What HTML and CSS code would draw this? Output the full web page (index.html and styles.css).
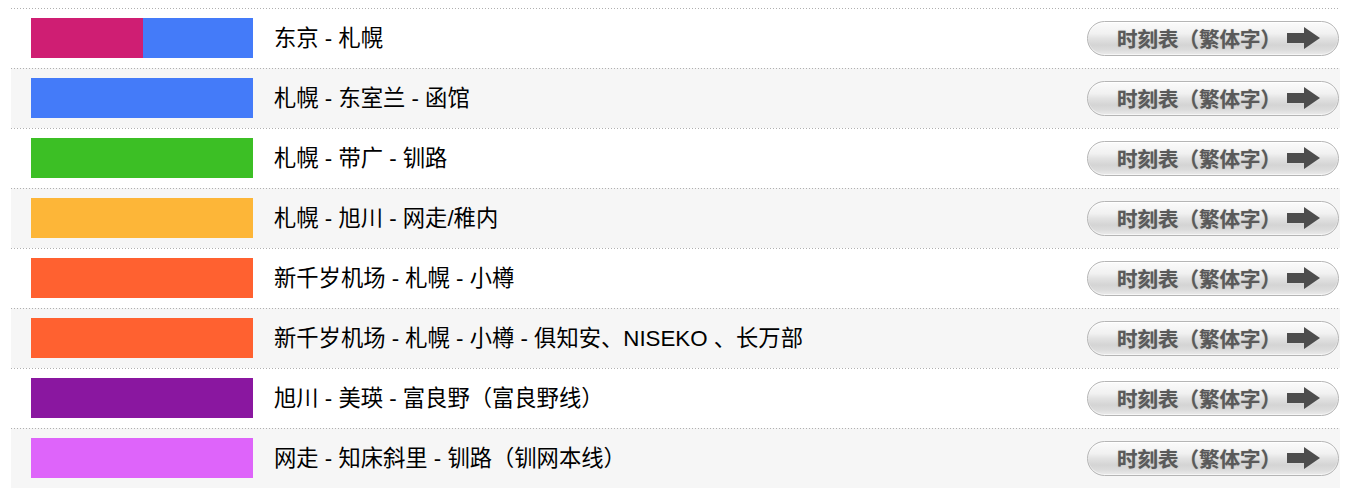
FILE: index.html
```html
<!DOCTYPE html>
<html lang="zh">
<head>
<meta charset="utf-8">
<title>时刻表</title>
<link rel="stylesheet" href="styles.css">
</head>
<body>
<div class="routes">
  <div class="row">
    <div class="swatch"><span style="background:#cf1e73;width:112px"></span><span style="background:#447bf9;flex:1"></span></div>
    <div class="name">东京 - 札幌</div>
    <a class="btn"><span class="btn-text">时刻表（繁体字）</span><svg class="arrow" width="34" height="24" viewBox="0 0 34 24"><path d="M0 7H17V1L33 12L17 23V17H0Z" fill="#4d4d4d"/></svg></a>
  </div>
  <div class="row alt">
    <div class="swatch"><span style="background:#447bf9;flex:1"></span></div>
    <div class="name">札幌 - 东室兰 - 函馆</div>
    <a class="btn"><span class="btn-text">时刻表（繁体字）</span><svg class="arrow" width="34" height="24" viewBox="0 0 34 24"><path d="M0 7H17V1L33 12L17 23V17H0Z" fill="#4d4d4d"/></svg></a>
  </div>
  <div class="row">
    <div class="swatch"><span style="background:#3cbf25;flex:1"></span></div>
    <div class="name">札幌 - 带广 - 钏路</div>
    <a class="btn"><span class="btn-text">时刻表（繁体字）</span><svg class="arrow" width="34" height="24" viewBox="0 0 34 24"><path d="M0 7H17V1L33 12L17 23V17H0Z" fill="#4d4d4d"/></svg></a>
  </div>
  <div class="row alt">
    <div class="swatch"><span style="background:#fdb638;flex:1"></span></div>
    <div class="name">札幌 - 旭川 - 网走/稚内</div>
    <a class="btn"><span class="btn-text">时刻表（繁体字）</span><svg class="arrow" width="34" height="24" viewBox="0 0 34 24"><path d="M0 7H17V1L33 12L17 23V17H0Z" fill="#4d4d4d"/></svg></a>
  </div>
  <div class="row">
    <div class="swatch"><span style="background:#ff6130;flex:1"></span></div>
    <div class="name">新千岁机场 - 札幌 - 小樽</div>
    <a class="btn"><span class="btn-text">时刻表（繁体字）</span><svg class="arrow" width="34" height="24" viewBox="0 0 34 24"><path d="M0 7H17V1L33 12L17 23V17H0Z" fill="#4d4d4d"/></svg></a>
  </div>
  <div class="row alt">
    <div class="swatch"><span style="background:#ff6130;flex:1"></span></div>
    <div class="name">新千岁机场 - 札幌 - 小樽 - 俱知安、NISEKO 、长万部</div>
    <a class="btn"><span class="btn-text">时刻表（繁体字）</span><svg class="arrow" width="34" height="24" viewBox="0 0 34 24"><path d="M0 7H17V1L33 12L17 23V17H0Z" fill="#4d4d4d"/></svg></a>
  </div>
  <div class="row">
    <div class="swatch"><span style="background:#8a17a0;flex:1"></span></div>
    <div class="name">旭川 - 美瑛 - 富良野（富良野线）</div>
    <a class="btn"><span class="btn-text">时刻表（繁体字）</span><svg class="arrow" width="34" height="24" viewBox="0 0 34 24"><path d="M0 7H17V1L33 12L17 23V17H0Z" fill="#4d4d4d"/></svg></a>
  </div>
  <div class="row alt">
    <div class="swatch"><span style="background:#de64fa;flex:1"></span></div>
    <div class="name">网走 - 知床斜里 - 钏路（钏网本线）</div>
    <a class="btn"><span class="btn-text">时刻表（繁体字）</span><svg class="arrow" width="34" height="24" viewBox="0 0 34 24"><path d="M0 7H17V1L33 12L17 23V17H0Z" fill="#4d4d4d"/></svg></a>
  </div>
</div>
</body>
</html>
```

FILE: styles.css
```css
html, body {
  margin: 0;
  padding: 0;
  background: #fff;
}
body {
  padding: 8px 20px 0 11px;
  font-family: "Liberation Sans", "Noto Sans CJK SC", sans-serif;
  color: #000;
}
.routes {
  width: 1329px;
}
.row {
  display: flex;
  align-items: center;
  padding: 10px 1px 10px 20px;
  height: 40px;
  background-color: #fff;
  background-image: repeating-linear-gradient(to right, #b0b0b0 0, #b0b0b0 1px, transparent 1px, transparent 3px);
  background-size: 100% 1px;
  background-repeat: no-repeat;
  background-position: 0 0;
}
.row.alt {
  background-color: #f6f6f6;
}
.swatch {
  display: flex;
  width: 222px;
  height: 40px;
  flex: none;
}
.swatch span {
  display: block;
  height: 100%;
}
.name {
  margin-left: 21px;
  font-size: 22.3px;
  line-height: 28px;
  padding-top: 2px;
  flex: 1;
  white-space: nowrap;
}
.btn {
  box-sizing: border-box;
  width: 252px;
  height: 35px;
  flex: none;
  display: flex;
  align-items: center;
  padding-left: 29px;
  border: 1px solid #b5b5b5;
  border-radius: 18px;
  background: linear-gradient(#fbfbfb 0%, #f1f1f1 35%, #e2e2e2 50%, #d4d4d4 70%, #dcdcdc 85%, #ececec 100%);
  box-shadow: inset 0 1px 0 #fff, inset 0 -1px 0 #f6f6f6;
}
.btn-text {
  font-family: "Noto Sans CJK SC", sans-serif;
  font-weight: bold;
  font-size: 20.5px;
  line-height: 24px;
  color: #5a5a5a;
  text-shadow: 0 0 1px rgba(90,90,90,0.5);
}
.arrow {
  margin-left: auto;
  margin-right: 17px;
}
```
